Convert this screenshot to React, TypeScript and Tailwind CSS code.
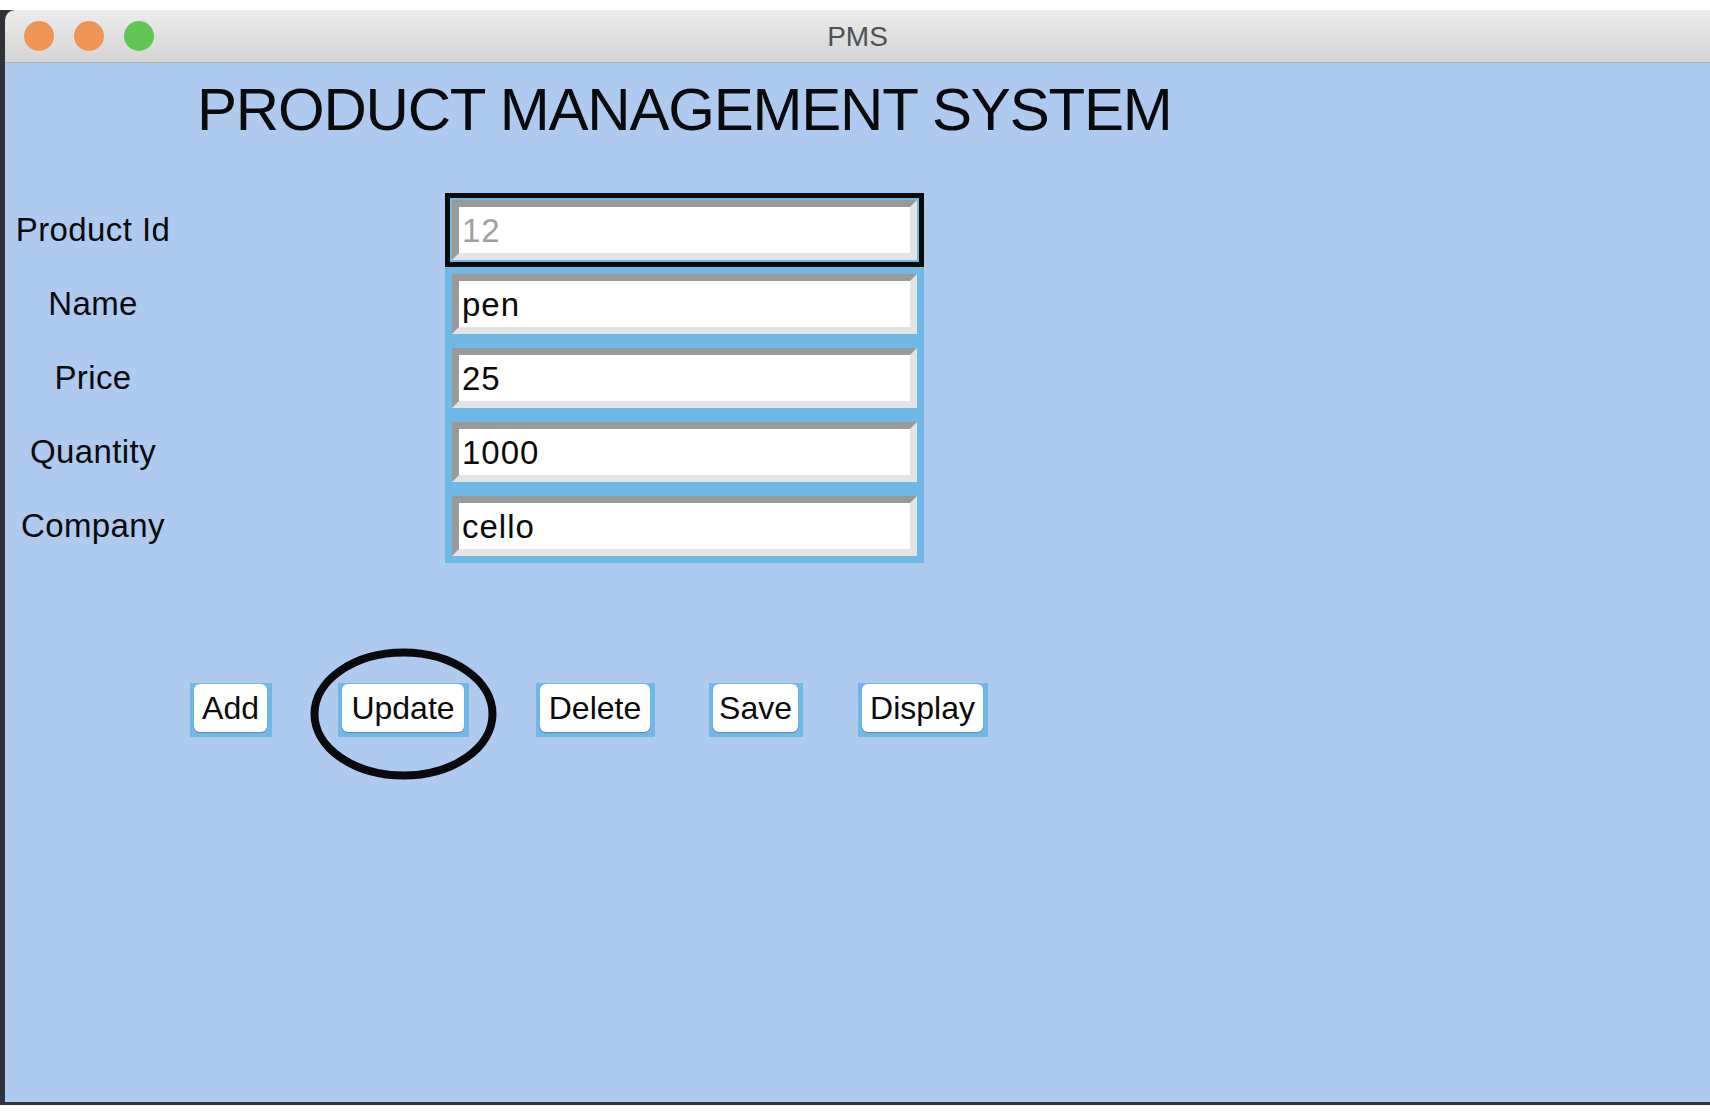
const fields = [
  { label: "Product Id", value: "12", disabled: true },
  { label: "Name", value: "pen" },
  { label: "Price", value: "25" },
  { label: "Quantity", value: "1000" },
  { label: "Company", value: "cello" },
];

const buttons = [
  { text: "Add", w: "w-[82px]", ml: "ml-[185px]" },
  { text: "Update", w: "w-[131px]", ml: "ml-[66px]", circled: true },
  { text: "Delete", w: "w-[119px]", ml: "ml-[67px]" },
  { text: "Save", w: "w-[94px]", ml: "ml-[54px]" },
  { text: "Display", w: "w-[130px]", ml: "ml-[55px]" },
];

const sans = "font-['Liberation_Sans',Arial,sans-serif]";

export default function App() {
  return (
    <div className={`h-[1120px] w-[1710px] bg-white pt-[10px] overflow-hidden ${sans}`}>
      <div className="h-[1095px] bg-[#2f3337] pl-[5px] pb-[3px]">
        <div className="flex h-full flex-col rounded-tl-[10px] overflow-hidden">
          {/* title bar */}
          <div className="relative flex h-[53px] shrink-0 items-center border-b border-[#b3b3b3] bg-gradient-to-b from-[#ececec] to-[#d4d4d4] pl-[19px]">
            <div className="flex gap-[20px]">
              <span className="h-[30px] w-[30px] rounded-full bg-[#ef9656]" />
              <span className="h-[30px] w-[30px] rounded-full bg-[#ef9656]" />
              <span className="h-[30px] w-[30px] rounded-full bg-[#62c654]" />
            </div>
            <span className="absolute inset-x-0 top-[13px] text-center text-[28px] leading-none text-[#4d5257]">PMS</span>
          </div>

          {/* content */}
          <div className="flex-1 bg-[#aecaee]">
            <h1 className="ml-[192px] mt-[17px] text-[60px] leading-none tracking-[-1.2px] text-[#0a0a0a]">
              PRODUCT MANAGEMENT SYSTEM
            </h1>

            <div className="mt-[53px] flex">
              <div className="flex w-[176px] flex-col">
                {fields.map((f) => (
                  <div key={f.label} className="flex h-[74px] items-center justify-center text-[33px] tracking-[0.4px] text-[#0a0a0a]">
                    {f.label}
                  </div>
                ))}
              </div>
              <div className="ml-[264px] w-[479px] bg-[#70b8e6]">
                {fields.map((f, i) => (
                  <div
                    key={f.label}
                    className={`h-[74px] p-[7px] ${i === 0 ? "outline outline-[5px] -outline-offset-[5px] outline-[#0a0a0a]" : ""}`}
                  >
                    <div className="flex h-full items-center border-[7px] border-t-[#9a9a9a] border-l-[#9a9a9a] border-b-[#e4e4e4] border-r-[#e4e4e4] bg-white pl-[3px]">
                      <span className={`text-[33px] leading-none tracking-[1px] ${f.disabled ? "text-[#a0a0a0]" : "text-[#0a0a0a]"}`}>
                        {f.value}
                      </span>
                    </div>
                  </div>
                ))}
              </div>
            </div>

            <div className="mt-[120px] flex">
              {buttons.map((b) => (
                <div key={b.text} className={`relative h-[54px] ${b.w} ${b.ml} bg-[#70b8e6] pl-[4px] pr-[5px] pt-[1px] pb-[5px]`}>
                  <div className="flex h-full items-center justify-center rounded-[6px] bg-white shadow-[0_1px_1px_rgba(0,0,0,0.25)] text-[32px] leading-none text-[#0a0a0a]">
                    {b.text}
                  </div>
                  {b.circled && (
                    <svg className="absolute left-[-28px] top-[-35px]" width="187" height="132" viewBox="0 0 187 132">
                      <ellipse cx="93.5" cy="66" rx="89" ry="61.5" fill="none" stroke="#0a0a0a" strokeWidth="8" />
                    </svg>
                  )}
                </div>
              ))}
            </div>
          </div>
        </div>
      </div>
    </div>
  );
}
